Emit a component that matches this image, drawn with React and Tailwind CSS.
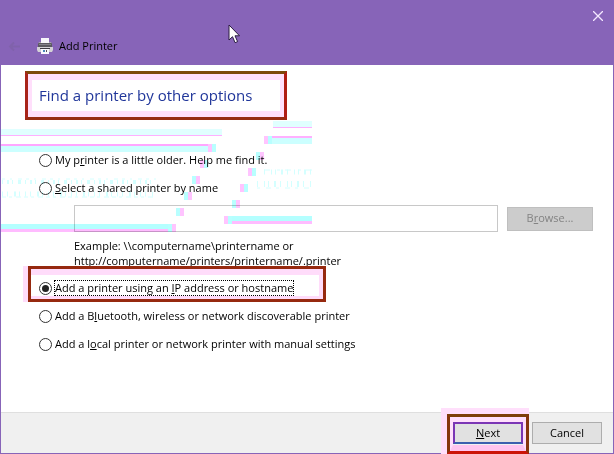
import { useState } from 'react';

const STREAKS = [
  // x, y, width, height, colour
  [1, 129, 221, 6, '#e0ffff'],
  [1, 135, 221, 1, '#ffb0ff'],
  [1, 144, 209, 2, '#ffa6ff'],
  [1, 146, 209, 6, '#ccffff'],
  [273, 121, 39, 6, '#e0ffff'],
  [273, 127, 39, 1, '#ffb0ff'],
  [268, 136, 44, 2, '#ffb0ff'],
  [270, 138, 42, 6, '#ccffff'],
  [1, 224, 171, 5, '#b4ffff'],
  [1, 229, 174, 3, '#ffbcff'],
  [228, 216, 84, 5, '#b4ffff'],
  [226, 221, 86, 3, '#ffbcff'],
];

// two-tone blocks: x, y, cyan half first
const BLOCKS = [
  [208, 144, false],
  [264, 136, false],
  [256, 152, true],
  [200, 160, false],
  [248, 168, false],
  [192, 176, true],
  [240, 184, false],
  [184, 192, true],
  [232, 200, true],
  [176, 208, true],
  [224, 216, false],
  [168, 224, true],
];

// broken cyan traces between the streaks: x1, x2, y, thickness, dashes
const TRACES = [
  [2, 156, 182, 4, '1 4 2 3 1 5 3 4'],
  [2, 156, 179, 1, '3 5 2 6 4 4'],
  [2, 153, 194, 5, '1 4 1 6 2 3 1 5'],
  [2, 153, 197, 1, '4 3 3 4 5 3'],
  [264, 312, 172, 5, '1 6 1 3 1 5 2 4'],
  [264, 312, 170, 1, '6 7 3 5'],
  [257, 312, 184, 6, '1 6 1 3 1 5 2 4'],
  [257, 312, 188, 1, '3 6 5 5'],
];

function Interference() {
  return (
    <svg
      className="pointer-events-none absolute top-0 left-0 mix-blend-multiply"
      width="312"
      height="240"
      aria-hidden="true"
    >
      {STREAKS.map(([x, y, w, h, fill]) => (
        <rect key={`${x}-${y}`} x={x} y={y} width={w} height={h} fill={fill} />
      ))}
      {BLOCKS.map(([x, y, cyanFirst]) => (
        <g key={`${x}-${y}`}>
          <rect x={x} y={y} width="4" height="8" fill={cyanFirst ? '#b8ffff' : '#ffc4ff'} />
          <rect x={x + 4} y={y} width="4" height="8" fill={cyanFirst ? '#ffc4ff' : '#b8ffff'} />
        </g>
      ))}
      {TRACES.map(([x1, x2, y, thickness, dashes]) => (
        <line
          key={`${x1}-${y}`}
          x1={x1}
          x2={x2}
          y1={y}
          y2={y}
          stroke="#d4ffff"
          strokeWidth={thickness}
          strokeDasharray={dashes}
        />
      ))}
    </svg>
  );
}

function PrinterIcon() {
  return (
    <svg width="16" height="16" viewBox="0 0 16 16" aria-hidden="true">
      <path d="M2 4h12l1 3H1z" fill="#a9a3ad" />
      <rect x="4" y="0" width="8" height="5" fill="#f6f6fa" />
      <rect x="1" y="5" width="14" height="5" rx="1" fill="#5b5a60" />
      <rect x="2" y="6" width="12" height="1" fill="#85838a" />
      <path d="M0 9h16v3l-1 2H1l-1-2z" fill="#d3d1d6" />
      <rect x="3" y="10" width="10" height="1" fill="#3c3a42" />
      <rect x="4" y="11" width="8" height="5" fill="#fafaff" />
      <rect x="6" y="12" width="2" height="2" fill="#4a86b8" />
      <rect x="9" y="12" width="1" height="2" fill="#55535a" />
    </svg>
  );
}

function Cursor() {
  return (
    <svg
      className="pointer-events-none absolute top-6 left-57"
      width="13"
      height="20"
      viewBox="0 0 13 20"
      aria-hidden="true"
    >
      <path
        d="M1 1v15l3.500-3.300 2.600 6 2.500-1.100-2.600-5.800h4.500z"
        fill="#fff"
        stroke="#2a1c40"
        strokeWidth="1"
      />
    </svg>
  );
}

function Option({ id, value, onChange, children }) {
  const checked = value === id;
  return (
    <div className="relative flex h-7 w-fit items-center">
      <input
        type="radio"
        name="method"
        id={id}
        checked={checked}
        onChange={() => onChange(id)}
        className="size-[13px] shrink-0 appearance-none rounded-full border border-[#333] bg-white bg-clip-content p-[2px] checked:bg-[#222]"
      />
      <label
        htmlFor={id}
        className={`ml-0.5 border border-dotted leading-[14px] ${checked ? 'border-black' : 'border-transparent'}`}
      >
        {children}
      </label>
      {id === 'ip' && (
        <span className="pointer-events-none absolute -top-2 -right-8 bottom-0 -left-4 border-l-5 border-[#ffdcfa]">
          <span className="block h-full border-3 border-[#96290f]">
            <span className="block h-full border-t-6 border-r-4 border-b-3 border-[#ffdcfa]" />
          </span>
        </span>
      )}
    </div>
  );
}

export default function App() {
  const [method, setMethod] = useState('ip');

  return (
    <div className="relative flex min-h-screen flex-col bg-[#8764b8] font-['Open_Sans',sans-serif] text-[11px] text-black">
      <header className="flex h-[65px] flex-col">
        <div className="flex h-8 justify-end">
          <button aria-label="Close" className="flex w-8 items-center justify-center">
            <svg width="10" height="10" viewBox="0 0 10 10" stroke="#f4e8ff" strokeWidth="1.300">
              <path d="M0 0l10 10M10 0L0 10" />
            </svg>
          </button>
        </div>
        <div className="flex h-7 items-center gap-1.5 pl-2">
          <button aria-label="Back" disabled className="mr-2.5">
            <svg width="13" height="11" viewBox="0 0 13 11" fill="none" stroke="#8062ab" strokeWidth="2">
              <path d="M12 5.500H2M6 1.500L2 5.500l4 4" />
            </svg>
          </button>
          <PrinterIcon />
          <span>Add Printer</span>
        </div>
      </header>

      <div className="mx-px mb-px flex grow flex-col bg-white">
        <main className="grow pt-1.5 pr-5 pl-6">
          <div className="w-fit border-3 border-t-[#7d4a0a] border-r-[#b01c14] border-b-[#962c12] border-l-[#a8241a]">
            <h1 className="border-x-4 border-y-6 border-[#ffdffb] py-1 pr-7 pl-[7px] text-[15px] leading-[23px] text-[#20369a]">
              Find a printer by other options
            </h1>
          </div>

          <div className="pt-[26px] pl-3.5">
            <Option id="older" value={method} onChange={setMethod}>
              My p<u>r</u>inter is a little older. Help me find it.
            </Option>
            <Option id="shared" value={method} onChange={setMethod}>
              <u>S</u>elect a shared printer by name
            </Option>
            <div className="pt-[3px] pb-1.5 pl-[35px]">
              <div className="flex items-center gap-[9px]">
                <input
                  type="text"
                  disabled
                  aria-label="Shared printer name"
                  className="h-[27px] min-w-0 grow border border-[#c8c8c8] px-1"
                />
                <button disabled className="h-6 w-[86px] border border-[#bfbfbf] bg-[#ccc] text-[#838383]">
                  B<u>r</u>owse...
                </button>
              </div>
              <p className="pt-1.5 leading-[15px]">
                Example: \\computername\printername or
                <br />
                http://computername/printers/printername/.printer
              </p>
            </div>
            <Option id="ip" value={method} onChange={setMethod}>
              Add a printer using an <u>I</u>P address or hostname
            </Option>
            <Option id="bluetooth" value={method} onChange={setMethod}>
              Add a B<u>l</u>uetooth, wireless or network discoverable printer
            </Option>
            <Option id="local" value={method} onChange={setMethod}>
              Add a l<u>o</u>cal printer or network printer with manual settings
            </Option>
          </div>
        </main>

        <footer className="flex h-[41px] items-center justify-end gap-[9px] border-t border-[#dfdfdf] bg-[#f0f0f0] pr-[11px]">
          <div className="relative">
            <span className="pointer-events-none absolute -top-3.5 -right-1.5 -bottom-2.5 -left-3 border-t-6 border-l-6 border-[#ffdffb]">
              <span className="block h-full border-3 border-t-[#7d3f08] border-r-[#85350c] border-b-[#cc1408] border-l-[#85350c]">
                <span className="block h-full border-x-3 border-t-5 border-b-6 border-x-[#ffdffb] border-t-[#ffdffb] border-b-[#ffc4ee]" />
              </span>
            </span>
            <button className="relative block h-[22px] w-[70px] border-2 border-[#7b35b5] border-b-[#3b5fae] bg-[#e1e1e1]">
              <u>N</u>ext
            </button>
          </div>
          <button className="h-[22px] w-[70px] border border-[#adadad] bg-[#e1e1e1]">Cancel</button>
        </footer>
      </div>

      <Interference />
      <Cursor />
    </div>
  );
}
